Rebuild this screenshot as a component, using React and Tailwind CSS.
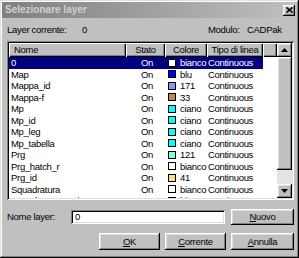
const rows = [
  { name: "0", color: "bianco", swatch: "bg-[#ffffff]" },
  { name: "Map", color: "blu", swatch: "bg-[#0000ff]" },
  { name: "Mappa_id", color: "171", swatch: "bg-[#8f8fff]" },
  { name: "Mappa-f", color: "33", swatch: "bg-[#b88a5c]" },
  { name: "Mp", color: "ciano", swatch: "bg-[#00ffff]" },
  { name: "Mp_id", color: "ciano", swatch: "bg-[#00ffff]" },
  { name: "Mp_leg", color: "ciano", swatch: "bg-[#00ffff]" },
  { name: "Mp_tabella", color: "ciano", swatch: "bg-[#00ffff]" },
  { name: "Prg", color: "121", swatch: "bg-[#7fffdf]" },
  { name: "Prg_hatch_r", color: "bianco", swatch: "bg-[#ffffff]" },
  { name: "Prg_id", color: "41", swatch: "bg-[#ffdf7f]" },
  { name: "Squadratura", color: "bianco", swatch: "bg-[#ffffff]" },
  { name: "Squadratura_vario", color: "bianco", swatch: "bg-[#ffffff]" },
];

const raised =
  "bg-[#c0c0c0] shadow-[inset_-1px_-1px_0_#000,inset_1px_1px_0_#fff,inset_-2px_-2px_0_#808080,inset_2px_2px_0_#dfdfdf]";
const sunken =
  "shadow-[inset_1px_1px_0_#808080,inset_-1px_-1px_0_#fff,inset_2px_2px_0_#000,inset_-2px_-2px_0_#dfdfdf]";

function Arrow({ up }) {
  return (
    <svg width="7" height="4" viewBox="0 0 7 4">
      <polygon points={up ? "3.5,0 7,4 0,4" : "0,0 7,0 3.5,4"} fill="#000" />
    </svg>
  );
}

function Button({ children, className = "" }) {
  return (
    <div
      className={`${raised} flex items-center justify-center whitespace-nowrap ${className}`}
    >
      {children}
    </div>
  );
}

function HeaderCell({ children, className = "" }) {
  return (
    <div
      className={`h-[14px] shrink-0 flex items-center whitespace-nowrap bg-[#c0c0c0] shadow-[inset_1px_1px_0_#fff,inset_-1px_-1px_0_#000,inset_-2px_-2px_0_#808080] ${className}`}
    >
      {children}
    </div>
  );
}

export default function App() {
  return (
    <div className="w-[299px] h-[258px] bg-[#c0c0c0] p-[2px] flex flex-col font-['Liberation_Sans',Arial,sans-serif] shadow-[inset_-1px_-1px_0_#000,inset_1px_1px_0_#dfdfdf,inset_-2px_-2px_0_#808080,inset_2px_2px_0_#fff]">
      {/* Title */}
      <div className="h-[16px] flex items-center justify-between pl-[3px] pr-[2px] bg-linear-to-r from-[#808080] to-[#c0c0c0]">
        <span className="text-[10px] font-bold text-[#d4d0c8] leading-none whitespace-nowrap">
          Selezionare layer
        </span>
        <div className={`${raised} w-[12px] h-[11px] flex items-center justify-center`}>
          <svg width="7" height="6" viewBox="0 0 7 6">
            <path d="M0.5 0.5 L6.5 5.5 M6.5 0.5 L0.5 5.5" stroke="#000" strokeWidth="1.6" />
          </svg>
        </div>
      </div>

      <div className="flex flex-col px-[5px] text-[9.5px] tracking-[-0.3px] leading-none text-black whitespace-nowrap">
        {/* Info row */}
        <div className="mt-[6px] h-[12px] flex items-center">
          <span className="w-[75px]">Layer corrente:</span>
          <span className="flex-1">0</span>
          <span className="w-[39px]">Modulo:</span>
          <span className="w-[45px]">CADPak</span>
        </div>

        {/* List */}
        <div className={`mt-[5px] w-[287px] h-[159px] p-[2px] bg-white flex overflow-hidden ${sunken}`}>
          <div className="w-[268px] shrink-0 flex flex-col overflow-hidden">
            <div className="flex shrink-0">
              <HeaderCell className="w-[117px] pl-[5px]">Nome</HeaderCell>
              <HeaderCell className="w-[39px] justify-center">Stato</HeaderCell>
              <HeaderCell className="w-[42px] justify-center">Colore</HeaderCell>
              <HeaderCell className="w-[56px] justify-center">Tipo di linea</HeaderCell>
              <HeaderCell className="w-[14px]" />
            </div>
            {rows.map((r, i) => {
              const sel = i === 0;
              return (
                <div key={i} className="h-[11.5px] shrink-0 flex">
                  <div
                    className={`w-[254px] flex items-center ${
                      sel ? "bg-[#000080] text-white" : ""
                    }`}
                  >
                    <span className="w-[117px] shrink-0 pl-[2px]">{r.name}</span>
                    <span className="w-[39px] shrink-0 pl-[15px]">On</span>
                    <span className="w-[42px] shrink-0 pl-[3px] flex items-center">
                      <span className={`w-[8px] h-[8px] shrink-0 border border-black ${r.swatch}`} />
                      <span className="ml-[4px]">{r.color}</span>
                    </span>
                    <span className="w-[56px] shrink-0 pl-[1px]">Continuous</span>
                  </div>
                </div>
              );
            })}
          </div>
          {/* Scrollbar */}
          <div className="w-[15px] shrink-0 flex flex-col">
            <Button className="h-[14px] shrink-0">
              <Arrow up />
            </Button>
            <div className={`${raised} h-[113px] shrink-0`} />
            <div className="flex-1 bg-[#e4e4e4]" />
            <Button className="h-[14px] shrink-0">
              <Arrow />
            </Button>
          </div>
        </div>

        {/* Nome layer */}
        <div className="mt-[9px] h-[16px] flex items-center">
          <span className="w-[64px] shrink-0">Nome layer:</span>
          <div className={`w-[154px] h-[14px] shrink-0 bg-white pl-[4px] flex items-center ${sunken}`}>
            0
          </div>
          <Button className="ml-[6px] w-[63px] h-[16px] shrink-0">
            <span>
              <span className="underline">N</span>uovo
            </span>
          </Button>
        </div>

        {/* Buttons */}
        <div className="mt-[8px] w-[287px] flex justify-end gap-[5px]">
          <Button className="w-[61px] h-[17px]">
            <span>
              <span className="underline">O</span>K
            </span>
          </Button>
          <Button className="w-[61px] h-[17px]">
            <span>
              <span className="underline">C</span>orrente
            </span>
          </Button>
          <Button className="w-[63px] h-[17px]">
            <span>
              <span className="underline">A</span>nnulla
            </span>
          </Button>
        </div>
      </div>
    </div>
  );
}
